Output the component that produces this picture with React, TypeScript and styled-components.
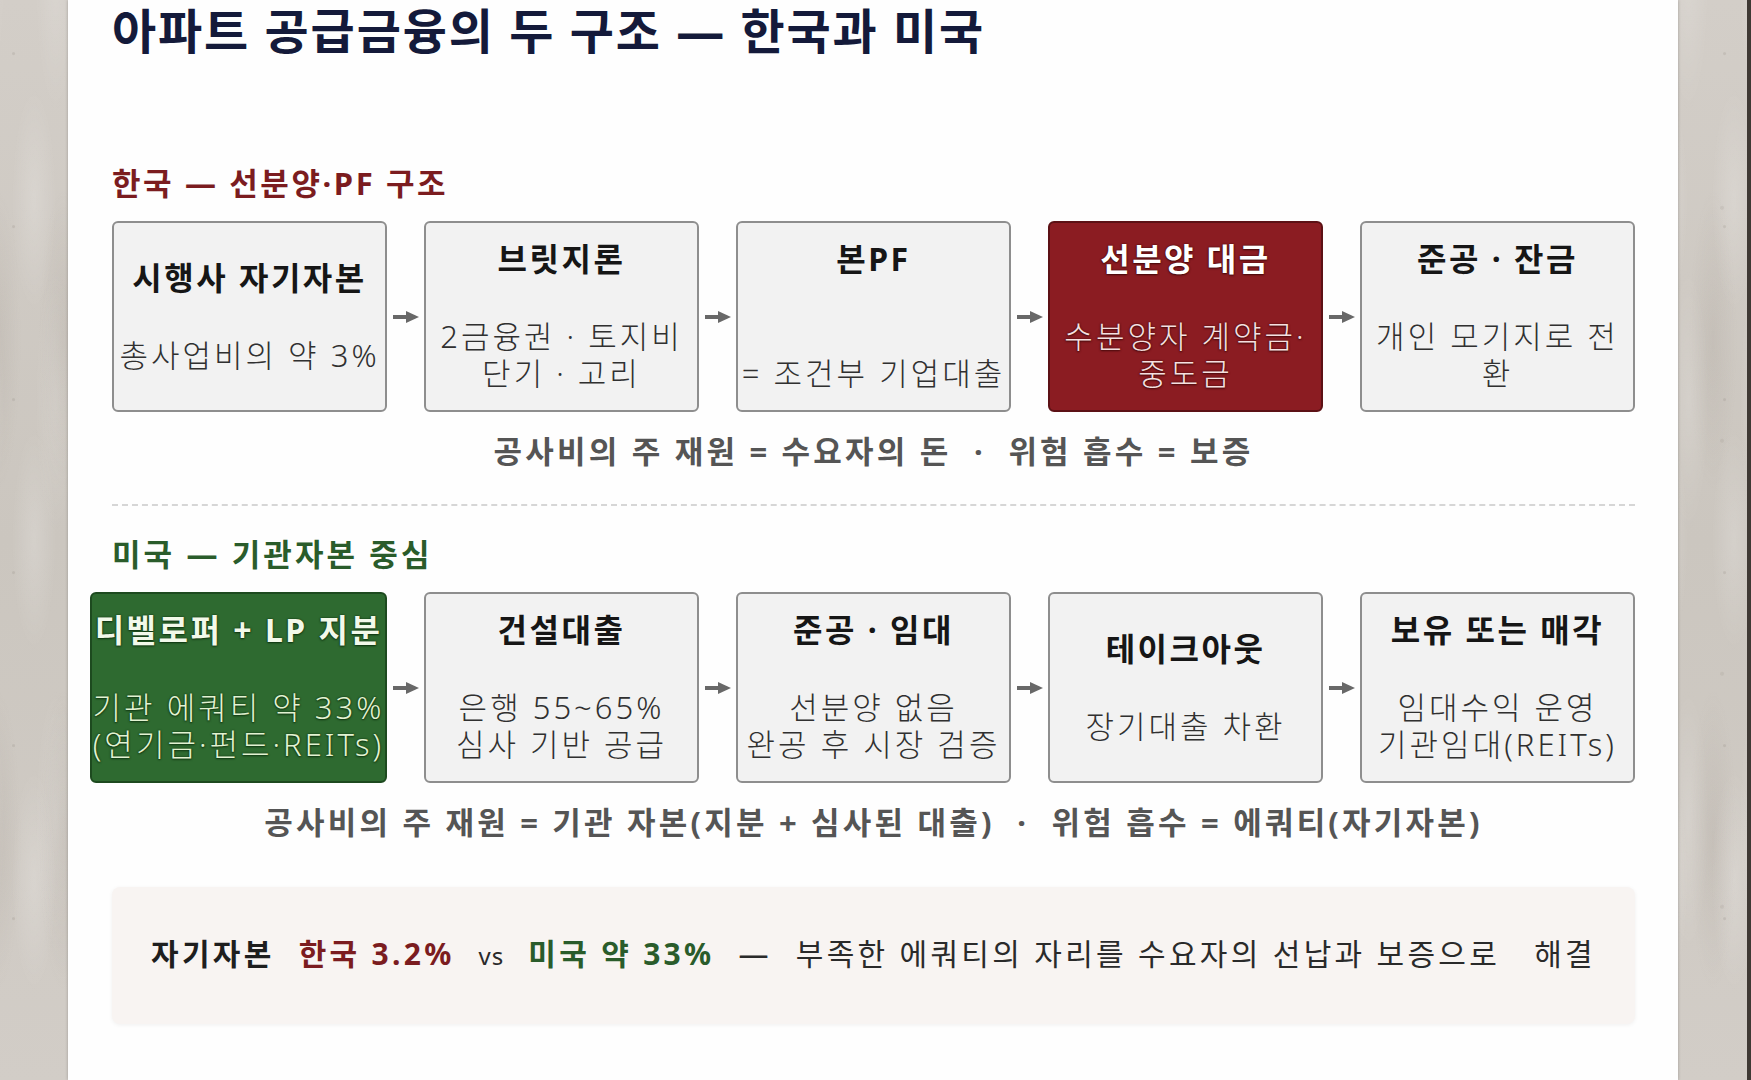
import React from 'react';
import styled, { createGlobalStyle, css } from 'styled-components';

const Global = createGlobalStyle`
  html, body { margin: 0; padding: 0; }
  body {
    width: 1751px;
    height: 1080px;
    overflow: hidden;
    font-family: "Noto Sans", "Noto Sans CJK KR", sans-serif;
  }
`;

const Page = styled.div`
  width: 1751px;
  height: 1080px;
  box-sizing: border-box;
  display: flex;
  padding-left: 68px;
  border-right: 4px solid #3f3934;
  background-color: #cfcac4;
  background-image:
    radial-gradient(circle at 23% 31%, rgba(110, 100, 90, 0.14) 0 1px, transparent 2px),
    radial-gradient(circle at 64% 72%, rgba(110, 100, 90, 0.1) 0 1.5px, transparent 2.5px),
    radial-gradient(ellipse 22px 110px at 50% 50%, rgba(255, 255, 255, 0.18), transparent),
    radial-gradient(ellipse 20px 130px at 50% 50%, rgba(255, 255, 255, 0.14), transparent),
    radial-gradient(ellipse 24px 150px at 50% 50%, rgba(150, 140, 130, 0.16), transparent),
    linear-gradient(180deg, #d3cec8, #cbc6bf 50%, #d2cdc7);
  background-size: 59px 173px, 97px 233px, 68px 340px, 71px 420px, 66px 500px, 100% 100%;
  background-position: 0 0, 11px 40px, 0 30px, 20px 190px, 30px 90px, 0 0;
`;

const Slide = styled.main`
  width: 1610px;
  height: 1080px;
  flex: 0 0 auto;
  box-sizing: border-box;
  background: #fefefe;
  padding: 3px 43px 0 44px;
  display: flex;
  flex-direction: column;
  box-shadow: 0 0 3px rgba(0, 0, 0, 0.25);
`;

const Title = styled.h1`
  margin: 0;
  font-size: 48px;
  font-weight: 700;
  line-height: 55px;
  letter-spacing: 1.9px;
  color: #141a3a;
  white-space: nowrap;
`;

type Tone = 'red' | 'green' | 'plain';

const toneColor = (t: Tone) => (t === 'red' ? '#7b1c1f' : t === 'green' ? '#2a5c2b' : '#222222');

const SectionHeading = styled.h2<{ $tone: Tone; $mt: number; $ls: number }>`
  margin: ${(p) => p.$mt}px 0 0;
  font-size: 31px;
  font-weight: 700;
  line-height: 40px;
  letter-spacing: ${(p) => p.$ls}px;
  color: ${(p) => toneColor(p.$tone)};
  white-space: nowrap;
`;

const FlowRow = styled.div`
  display: flex;
  align-items: center;
  margin-top: 18px;
`;

type Variant = 'plain' | 'red' | 'green';

const Step = styled.div<{ $variant: Variant; $bleed?: number }>`
  flex: 0 0 auto;
  width: ${(p) => 275 + (p.$bleed || 0)}px;
  margin-left: ${(p) => -(p.$bleed || 0)}px;
  height: 191px;
  box-sizing: border-box;
  border-radius: 6px;
  padding: 0 4px;
  display: flex;
  flex-direction: column;
  justify-content: center;
  align-items: center;
  text-align: center;
  white-space: nowrap;
  ${(p) =>
    p.$variant === 'red'
      ? css`
          background: #8b1c22;
          border: 2px solid #5c1115;
          color: #ffffff;
          --sub: #f6e0e0;
          text-shadow: 0 0 2px rgba(40, 0, 0, 0.8), 0 1px 2px rgba(40, 0, 0, 0.6);
        `
      : p.$variant === 'green'
      ? css`
          background: #2e6a30;
          border: 2px solid #1d4a1f;
          color: #f2f9ea;
          --sub: #e2f3d2;
          text-shadow: 0 0 2px rgba(0, 30, 0, 0.8), 0 1px 2px rgba(0, 30, 0, 0.6);
        `
      : css`
          background: #f2f2f2;
          border: 2px solid #8e8e8e;
          color: #161616;
          --sub: #303030;
        `}
`;

const StepTitle = styled.div`
  font-size: 32px;
  font-weight: 700;
  line-height: 36px;
  letter-spacing: 2.5px;
`;

const StepBody = styled.div`
  margin-top: 41px;
  font-size: 31px;
  font-weight: 300;
  line-height: 37px;
  letter-spacing: 3px;
  color: var(--sub);
`;

const Line = styled.div`
  height: 37px;
`;

const ArrowSlot = styled.div`
  flex: 0 0 37px;
  display: flex;
  justify-content: center;
  align-items: center;
`;

const Caption = styled.p`
  margin: 19px 0 0;
  text-align: center;
  font-size: 31px;
  font-weight: 700;
  line-height: 40px;
  letter-spacing: 3.2px;
  color: #555555;
  white-space: pre;
`;

const Divider = styled.hr`
  margin: 33px 0 0;
  border: none;
  border-top: 2px dashed #d6d6d6;
  height: 0;
`;

const Summary = styled.section`
  margin-top: 45px;
  height: 137px;
  box-sizing: border-box;
  border-radius: 8px;
  background: #f8f4f2;
  box-shadow: 0 1px 4px rgba(0, 0, 0, 0.06);
  display: flex;
  align-items: baseline;
  justify-content: center;
  padding-top: 47px;
  gap: 24px;
  white-space: nowrap;
`;

const SumPart = styled.span<{ $tone: Tone; $bold?: boolean; $small?: boolean; $extra?: number }>`
  font-size: ${(p) => (p.$small ? 24 : 30)}px;
  font-weight: ${(p) => (p.$bold ? 700 : 400)};
  letter-spacing: ${(p) => (p.$small ? 1 : 3.3)}px;
  line-height: 40px;
  margin-left: ${(p) => p.$extra || 0}px;
  color: ${(p) => (p.$tone === 'plain' ? (p.$bold ? '#1e1e1e' : '#2a2a2a') : toneColor(p.$tone))};
`;

const Arrow = () => (
  <ArrowSlot>
    <svg width="26" height="14" viewBox="0 0 26 14" aria-hidden="true">
      <rect x="0" y="5" width="16" height="4" fill="#686868" />
      <polygon points="13,1 26,7 13,13" fill="#686868" />
    </svg>
  </ArrowSlot>
);

type StepData = { title: string; lines: string[]; variant?: Variant; bleed?: number };

const korea: StepData[] = [
  { title: '시행사 자기자본', lines: ['총사업비의 약 3%'] },
  { title: '브릿지론', lines: ['2금융권 · 토지비', '단기 · 고리'] },
  { title: '본PF', lines: ['', '= 조건부 기업대출'] },
  { title: '선분양 대금', lines: ['수분양자 계약금·', '중도금'], variant: 'red' },
  { title: '준공 · 잔금', lines: ['개인 모기지로 전', '환'] },
];

const usa: StepData[] = [
  { title: '디벨로퍼 + LP 지분', lines: ['기관 에쿼티 약 33%', '(연기금·펀드·REITs)'], variant: 'green', bleed: 22 },
  { title: '건설대출', lines: ['은행 55~65%', '심사 기반 공급'] },
  { title: '준공 · 임대', lines: ['선분양 없음', '완공 후 시장 검증'] },
  { title: '테이크아웃', lines: ['장기대출 차환'] },
  { title: '보유 또는 매각', lines: ['임대수익 운영', '기관임대(REITs)'] },
];

const Flow = ({ steps }: { steps: StepData[] }) => (
  <FlowRow>
    {steps.map((s, i) => (
      <React.Fragment key={s.title}>
        {i > 0 && <Arrow />}
        <Step $variant={s.variant || 'plain'} $bleed={s.bleed}>
          <StepTitle>{s.title}</StepTitle>
          <StepBody>
            {s.lines.map((l, j) => (
              <Line key={j}>{l || '\u00a0'}</Line>
            ))}
          </StepBody>
        </Step>
      </React.Fragment>
    ))}
  </FlowRow>
);

export default function App() {
  return (
    <>
      <Global />
      <Page>
        <Slide>
          <Title>아파트 공급금융의 두 구조 — 한국과 미국</Title>

          <SectionHeading $tone="red" $mt={105} $ls={2.6}>
            한국 — 선분양·PF 구조
          </SectionHeading>
          <Flow steps={korea} />
          <Caption>{'공사비의 주 재원 = 수요자의 돈  ·  위험 흡수 = 보증'}</Caption>

          <Divider />

          <SectionHeading $tone="green" $mt={28} $ls={3.1}>
            미국 — 기관자본 중심
          </SectionHeading>
          <Flow steps={usa} />
          <Caption>{'공사비의 주 재원 = 기관 자본(지분 + 심사된 대출)  ·  위험 흡수 = 에쿼티(자기자본)'}</Caption>

          <Summary>
            <SumPart $tone="plain" $bold>
              자기자본
            </SumPart>
            <SumPart $tone="red" $bold>
              한국 3.2%
            </SumPart>
            <SumPart $tone="plain" $small>
              vs
            </SumPart>
            <SumPart $tone="green" $bold>
              미국 약 33%
            </SumPart>
            <SumPart $tone="plain">—</SumPart>
            <SumPart $tone="plain">부족한 에쿼티의 자리를 수요자의 선납과 보증으로</SumPart>
            <SumPart $tone="plain" $extra={10}>
              해결
            </SumPart>
          </Summary>
        </Slide>
      </Page>
    </>
  );
}
